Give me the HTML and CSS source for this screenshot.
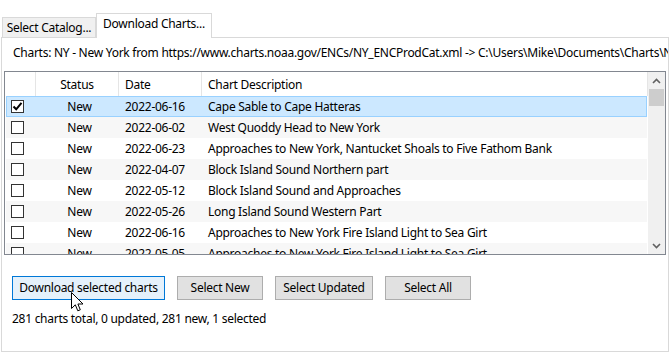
FILE: index.html
```html
<!DOCTYPE html>
<html lang="en">
<head>
    <meta charset="UTF-8">
    <title>Download Charts</title>
    <link rel="stylesheet" href="styles.css">
</head>
<body>
    <div class="tabs">
        <div class="tab">Select Catalog...</div>
        <div class="tab active">Download Charts...</div>
    </div>
    <div class="panel">
        <div class="source">Charts: NY - New York from https://www.charts.noaa.gov/ENCs/NY_ENCProdCat.xml -&gt; C:\Users\Mike\Documents\Charts\NY</div>
        <div class="listview">
            <div class="list">
                <div class="row header">
                    <div class="cell"></div>
                    <div class="cell center">Status</div>
                    <div class="cell">Date</div>
                    <div class="cell">Chart Description</div>
                </div>
                <div class="row selected">
                    <div class="cell"><span class="check checked"><svg width="11" height="11" viewBox="0 0 11 11"><path d="M1.5 5.5 L4.2 8.3 L9.5 1.8" fill="none" stroke="#000" stroke-width="2"/></svg></span></div>
                    <div class="cell center">New</div>
                    <div class="cell">2022-06-16</div>
                    <div class="cell">Cape Sable to Cape Hatteras</div>
                </div>
                <div class="row alt">
                    <div class="cell"><span class="check"></span></div>
                    <div class="cell center">New</div>
                    <div class="cell">2022-06-02</div>
                    <div class="cell">West Quoddy Head to New York</div>
                </div>
                <div class="row">
                    <div class="cell"><span class="check"></span></div>
                    <div class="cell center">New</div>
                    <div class="cell">2022-06-23</div>
                    <div class="cell">Approaches to New York, Nantucket Shoals to Five Fathom Bank</div>
                </div>
                <div class="row alt">
                    <div class="cell"><span class="check"></span></div>
                    <div class="cell center">New</div>
                    <div class="cell">2022-04-07</div>
                    <div class="cell">Block Island Sound Northern part</div>
                </div>
                <div class="row">
                    <div class="cell"><span class="check"></span></div>
                    <div class="cell center">New</div>
                    <div class="cell">2022-05-12</div>
                    <div class="cell">Block Island Sound and Approaches</div>
                </div>
                <div class="row alt">
                    <div class="cell"><span class="check"></span></div>
                    <div class="cell center">New</div>
                    <div class="cell">2022-05-26</div>
                    <div class="cell">Long Island Sound Western Part</div>
                </div>
                <div class="row">
                    <div class="cell"><span class="check"></span></div>
                    <div class="cell center">New</div>
                    <div class="cell">2022-06-16</div>
                    <div class="cell">Approaches to New York Fire Island Light to Sea Girt</div>
                </div>
                <div class="row alt">
                    <div class="cell"><span class="check"></span></div>
                    <div class="cell center">New</div>
                    <div class="cell">2022-05-05</div>
                    <div class="cell">Approaches to New York Fire Island Light to Sea Girt</div>
                </div>
            </div>
            <div class="scrollbar">
                <div class="arrow"><svg width="9" height="6" viewBox="0 0 9 6"><path d="M1 5 L4.5 1.5 L8 5" fill="none" stroke="#606060" stroke-width="1.6"/></svg></div>
                <div class="thumb"></div>
                <div class="track"></div>
                <div class="arrow"><svg width="9" height="6" viewBox="0 0 9 6"><path d="M1 1 L4.5 4.5 L8 1" fill="none" stroke="#606060" stroke-width="1.6"/></svg></div>
            </div>
        </div>
        <div class="buttons">
            <div class="button hover">Download selected charts
                <svg class="cursor" width="14" height="22" viewBox="0 0 14 22"><path d="M0.5 0.5 L0.5 16.5 L4.3 12.8 L6.8 18.8 L9.3 17.8 L6.9 12 L12 12 Z" fill="#fff" stroke="#000" stroke-width="1"/></svg>
            </div>
            <div class="button">Select New</div>
            <div class="button">Select Updated</div>
            <div class="button">Select All</div>
        </div>
        <div class="summary">281 charts total, 0 updated, 281 new, 1 selected</div>
    </div>
</body>
</html>
```

FILE: styles.css
```css
body {
    margin: 0;
    background-color: #fff;
    font-family: "Segoe UI", "Noto Sans", sans-serif;
    font-size: 12px;
    letter-spacing: -0.27px;
    color: #000;
    overflow: hidden;
}

.tabs {
    display: flex;
    align-items: flex-end;
    padding: 13px 0 0 2px;
    height: 24px;
}

.tab {
    background-color: #f0f0f0;
    border: 1px solid #d9d9d9;
    border-bottom: none;
    box-sizing: border-box;
    height: 20px;
    line-height: 19px;
    width: 94px;
    text-align: center;
    white-space: nowrap;
}

.tab.active {
    background-color: #fff;
    height: 25px;
    line-height: 20px;
    width: 116px;
    margin-bottom: -1px;
    position: relative;
    z-index: 1;
}

.panel {
    margin-left: 1px;
    width: 668px;
    height: 315px;
    border: 1px solid #d9d9d9;
    box-sizing: border-box;
    padding: 7px 0 0 2px;
    overflow: hidden;
}

.source {
    white-space: nowrap;
    line-height: 16px;
    padding-left: 9px;
    margin-bottom: 10px;
}

.listview {
    display: flex;
    width: 662px;
    height: 184px;
    border: 1px solid #828790;
    box-sizing: border-box;
    overflow: hidden;
}

.list {
    flex: 1;
    overflow: hidden;
}

.row {
    display: grid;
    grid-template-columns: 31px 83px 83px 1fr;
    height: 21px;
    line-height: 20px;
    margin: 0 1px;
    border: 1px solid transparent;
    box-sizing: border-box;
    white-space: nowrap;
}

.row.header {
    height: 24px;
    line-height: 26px;
    margin: 0;
    border: none;
}

.header .cell {
    border-right: 1px solid #e5e5e5;
    padding-left: 6px;
}

.header .cell.center {
    padding-left: 0;
}

.row.alt {
    background-color: #f7f7f7;
}

.row.selected {
    background-color: #cce8ff;
    border-color: #99d1ff;
}

.cell {
    padding-left: 4px;
    overflow: hidden;
}

.cell.center {
    text-align: center;
    padding-left: 0;
}

.check {
    display: inline-block;
    width: 13px;
    height: 13px;
    border: 1px solid #333;
    box-sizing: border-box;
    background-color: #fff;
    vertical-align: middle;
    margin-top: -3px;
    position: relative;
}

.check svg {
    display: block;
}

.scrollbar {
    width: 17px;
    display: flex;
    flex-direction: column;
    background-color: #f0f0f0;
}

.arrow {
    height: 17px;
    display: flex;
    align-items: center;
    justify-content: center;
}

.thumb {
    height: 17px;
    margin: 0 1px;
    background-color: #cdcdcd;
}

.track {
    flex: 1;
}

.buttons {
    display: flex;
    gap: 12px;
    margin: 21px 0 0 8px;
}

.button {
    height: 24px;
    box-sizing: border-box;
    border: 1px solid #adadad;
    background-color: #e1e1e1;
    line-height: 21px;
    text-align: center;
    position: relative;
}

.button:nth-child(1) { width: 153px; }
.button:nth-child(2) { width: 86px; }
.button:nth-child(3) { width: 98px; }
.button:nth-child(4) { width: 86px; }

.button.hover {
    background-color: #e5f1fb;
    border-color: #0078d7;
}

.cursor {
    position: absolute;
    left: 58px;
    top: 15px;
}

.summary {
    margin: 11px 0 0 8px;
    line-height: 16px;
}
```
